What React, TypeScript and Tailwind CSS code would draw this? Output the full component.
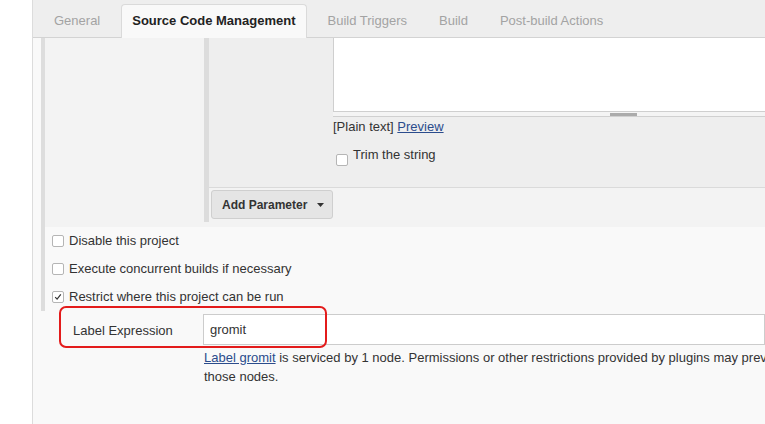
import React from "react";

const tabs = ["General", "Source Code Management", "Build Triggers", "Build", "Post-build Actions"];

function Box({ checked = false }: { checked?: boolean }) {
  return (
    <span className="flex h-[12px] w-[12px] shrink-0 items-center justify-center rounded-[2px] border border-[#b5b5b5] bg-white">
      {checked && (
        <svg width="8" height="8" viewBox="0 0 8 8">
          <path d="M1.2 4.2 L3.1 6.2 L6.8 1.4" fill="none" stroke="#333" strokeWidth="1.2" />
        </svg>
      )}
    </span>
  );
}

export default function App() {
  return (
    <div className="flex h-[424px] w-[765px] overflow-hidden bg-white font-['Liberation_Sans',Arial,sans-serif] text-[13px] text-[#333]">
      <div className="w-[32px] shrink-0 bg-white" />
      <div className="flex min-w-0 flex-1 flex-col border-l border-[#dcdcdc] bg-[#f9f9f9]">
        {/* tab bar */}
        <div className="flex h-[38px] shrink-0 items-end border-b border-[#d3d3d3] bg-[#eeeeee] pl-[5px]">
          {tabs.map((t, i) => {
            const active = i === 1;
            return (
              <div key={t} className="px-[5px]">
                <div
                  className={
                    active
                      ? "-mb-px flex h-[34px] items-center whitespace-nowrap rounded-t-[4px] border border-b-0 border-[#dadada] bg-[#f9f9f9] px-[10px] pb-px text-[13px] font-bold text-[#222]"
                      : "flex h-[33px] items-center whitespace-nowrap border border-b-0 border-transparent px-[10px] text-[#a3a3a3]"
                  }
                >
                  {t}
                </div>
              </div>
            );
          })}
        </div>

        {/* content */}
        <div className="flex min-w-0 flex-1 flex-col pl-[8px]">
          <div className="border-l-4 border-[#dddddd]">
            <div className="flex bg-[#f3f3f3] pb-[5px]">
              <div className="w-[159px] shrink-0" />
              <div className="flex min-w-0 flex-1 flex-col border-l-[5px] border-[#dcdcdc] pb-[3px]">
                {/* parameter block */}
                <div className="flex h-[150px] border-b border-[#dadada] bg-[#eeeeee]">
                  <div className="w-[124px] shrink-0" />
                  <div className="flex min-w-0 flex-1 flex-col">
                    <div className="h-[74px] border-b border-l border-[#cfcfcf] bg-white" />
                    <div className="relative h-[5px] border-b border-[#d0d0d0] bg-[#f4f4f4]">
                      <div className="absolute left-[277px] top-[1px] h-[3px] w-[27px] bg-[#ababab]" />
                    </div>
                    <div className="mt-[2px] leading-[16px]">
                      [Plain text]{" "}
                      <span className="text-[#2b4c8c] underline">Preview</span>
                    </div>
                    <div className="mt-[12px] flex items-start">
                      <span className="ml-[3px] mt-[7px]">
                        <Box />
                      </span>
                      <span className="ml-[5px] leading-[16px]">Trim the string</span>
                    </div>
                  </div>
                </div>
                {/* add parameter button */}
                <div className="mt-[2px] flex pl-[2px]">
                  <div className="flex h-[29px] w-[122px] items-center rounded-[3px] border border-[#cfcfcf] bg-[#e5e5e5] pl-[10px] text-[12px] font-bold text-[#333]">
                    <span>Add Parameter</span>
                    <svg className="ml-[10px]" width="7" height="4" viewBox="0 0 7 4">
                      <path d="M0 0 H7 L3.5 4 Z" fill="#333" />
                    </svg>
                  </div>
                </div>
              </div>
            </div>

            {/* checkbox rows */}
            <div className="flex flex-col pl-[7px]">
              <div className="flex h-[28px] items-center">
                <Box />
                <span className="ml-[5px]">Disable this project</span>
              </div>
              <div className="flex h-[28px] items-center">
                <Box />
                <span className="ml-[5px]">Execute concurrent builds if necessary</span>
              </div>
              <div className="flex h-[28px] items-center">
                <Box checked />
                <span className="ml-[5px]">Restrict where this project can be run</span>
              </div>
            </div>
          </div>

          {/* label expression */}
          <div className="relative -mt-[5px] flex h-[42px] items-start">
            <div className="ml-[32px] mt-[17px] w-[130px] shrink-0 leading-[16px]">Label Expression</div>
            <div className="mt-[8px] flex h-[31px] min-w-0 flex-1 items-center border border-[#cccccc] bg-white pl-[6px]">
              gromit
            </div>
            <div className="absolute left-[18px] top-0 h-[42px] w-[268px] rounded-[7px] border-2 border-[#e31b1b]" />
          </div>

          {/* help text */}
          <div className="pl-[163px] leading-[19px]">
            <div className="whitespace-nowrap">
              <span className="text-[#2b4c8c] underline">Label gromit</span> is serviced by 1 node. Permissions or
              other restrictions provided by plugins may prevent this job from running on
            </div>
            <div className="whitespace-nowrap">those nodes.</div>
          </div>
        </div>
      </div>
    </div>
  );
}
